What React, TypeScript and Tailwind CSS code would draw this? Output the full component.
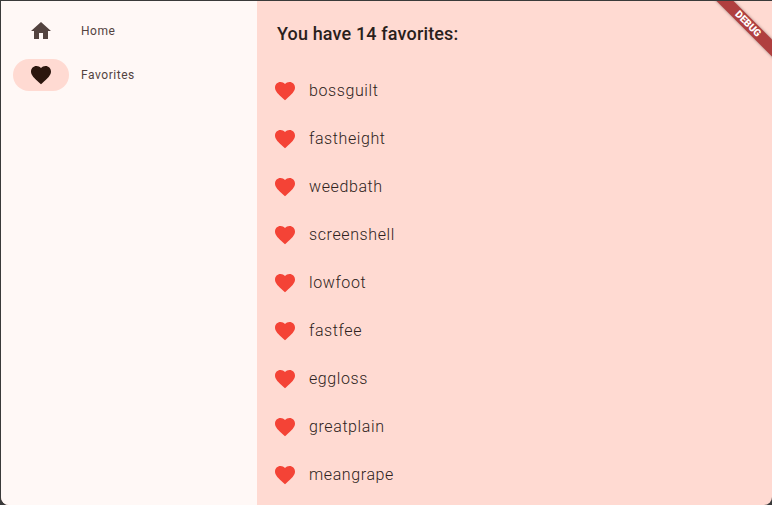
const favorites = [
  'bossguilt',
  'fastheight',
  'weedbath',
  'screenshell',
  'lowfoot',
  'fastfee',
  'eggloss',
  'greatplain',
  'meangrape',
];

const HOME = 'M10 20v-6h4v6h5v-8h3L12 3 2 12h3v8z';
const HEART =
  'M12 21.35l-1.45-1.32C5.4 15.36 2 12.28 2 8.5 2 5.42 4.42 3 7.5 3c1.74 0 3.41.81 4.5 2.09C13.09 3.81 14.76 3 16.5 3 19.58 3 22 5.42 22 8.5c0 3.78-3.4 6.86-8.55 11.54L12 21.35z';

function Icon({ d, className }: { d: string; className: string }) {
  return (
    <svg viewBox="0 0 24 24" className={`h-6 w-6 fill-current ${className}`}>
      <path d={d} />
    </svg>
  );
}

export default function App() {
  return (
    <div className="h-[505px] w-[772px] overflow-hidden bg-[#3a3a3a] font-['Roboto',sans-serif]">
      <div className="relative ml-px mt-px flex h-[504px] w-[771px] overflow-hidden rounded-b-lg bg-[#ffdad2]">
        <nav className="flex w-[256px] shrink-0 flex-col gap-3 bg-[#fff8f6] px-3 pt-[14px] text-xs tracking-[0.55px] text-[#53433f]">
          <div className="flex h-8 items-center gap-3">
            <div className="flex h-8 w-14 items-center justify-center">
              <Icon d={HOME} className="text-[#53433f]" />
            </div>
            <span>Home</span>
          </div>
          <div className="flex h-8 items-center gap-3">
            <div className="flex h-8 w-14 items-center justify-center rounded-full bg-[#ffdad2]">
              <Icon d={HEART} className="text-[#2c160e]" />
            </div>
            <span>Favorites</span>
          </div>
        </nav>
        <main className="min-w-0 flex-1">
          <h1 className="px-5 pb-[21px] pt-[21px] text-lg font-medium leading-6 tracking-[0.15px] text-[#2a1f1c]">
            You have 14 favorites:
          </h1>
          <ul>
            {favorites.map((name) => (
              <li key={name} className="flex h-12 items-center gap-3 pl-4">
                <Icon d={HEART} className="text-[#f44336]" />
                <span className="text-base font-[350] tracking-[0.6px] text-[#2e2220]">{name}</span>
              </li>
            ))}
          </ul>
        </main>
        <div className="absolute right-[-26px] top-[17px] flex h-3 w-[100px] rotate-45 items-center justify-center bg-[#b03f3f] text-[10px] font-black leading-3 text-white shadow-[0_0_3px_rgba(0,0,0,0.4)]">
          DEBUG
        </div>
      </div>
    </div>
  );
}
